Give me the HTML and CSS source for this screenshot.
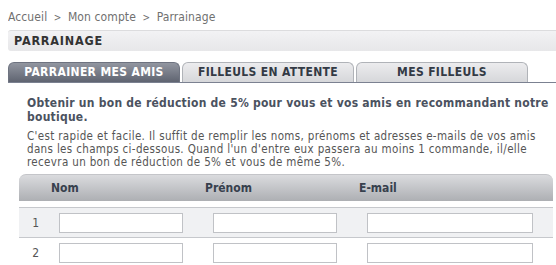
FILE: index.html
```html
<!DOCTYPE html>
<html>
<head>
  <meta charset="utf-8">
  <title>Parrainage</title>
  <link rel="stylesheet" href="styles.css">
</head>
<body>

<div class="crumbs">
  <a href="#">Accueil</a> <span class="sep">&gt;</span> <a href="#">Mon compte</a> <span class="sep">&gt;</span> <span>Parrainage</span>
</div>

<h1 class="page-title">PARRAINAGE</h1>

<div class="tabs">
  <a href="#" class="tab current">PARRAINER MES AMIS</a>
  <a href="#" class="tab">FILLEULS EN ATTENTE</a>
  <a href="#" class="tab">MES FILLEULS</a>
</div>

<div class="content">
  <h3 class="intro">Obtenir un bon de réduction de 5% pour vous et vos amis en recommandant notre boutique.</h3>
  <p class="text">
    C'est rapide et facile. Il suffit de remplir les noms, prénoms et adresses e-mails de vos amis
    dans les champs ci-dessous. Quand l'un d'entre eux passera au moins 1 commande, il/elle
    recevra un bon de réduction de 5% et vous de même 5%.
  </p>

  <div class="friends">
    <div class="friends-head">
      <span></span>
      <span>Nom</span>
      <span>Prénom</span>
      <span>E-mail</span>
    </div>
    <div class="friend-row odd">
      <span class="num">1</span>
      <span><input type="text"></span>
      <span><input type="text"></span>
      <span><input type="text" class="mail"></span>
    </div>
    <div class="friend-row">
      <span class="num">2</span>
      <span><input type="text"></span>
      <span><input type="text"></span>
      <span><input type="text" class="mail"></span>
    </div>
  </div>
</div>

</body>
</html>
```

FILE: styles.css
```css
body {
  margin: 0 0 0 8px;
  padding-top: 9px;
  font-family: "DejaVu Sans Condensed", "DejaVu Sans", sans-serif;
  font-size: 11px;
  color: #555;
  background: #fff;
}
a {
  text-decoration: none;
  color: inherit;
}
.crumbs {
  font-size: 12px;
  line-height: 16px;
  letter-spacing: 0.1px;
  color: #707070;
}
.crumbs .sep {
  font-size: 10px;
  margin: 0 3px;
}
.page-title {
  margin: 4px 0 0;
  height: 20px;
  line-height: 20px;
  padding-left: 6px;
  font-size: 12.5px;
  letter-spacing: 0.8px;
  font-weight: bold;
  color: #333;
  border-top: 1px solid #dcdcde;
  border-radius: 3px 0 0 3px;
  background: linear-gradient(#f2f2f4, #e7e7e9);
}
.tabs {
  display: flex;
  gap: 2px;
  margin-top: 11px;
  border-bottom: 1px solid #7b8191;
}
.tab {
  width: 170px;
  height: 19px;
  line-height: 19px;
  text-align: center;
  font-size: 12px;
  letter-spacing: 0.35px;
  font-weight: bold;
  color: #333a45;
  border: 1px solid #b0b3b8;
  border-bottom: 0;
  border-radius: 6px 6px 0 0;
  background: linear-gradient(#ececee, #d6d7da);
}
.tab.current {
  color: #fff;
  border-color: #6e7380;
  background: linear-gradient(#9296a0, #5f6471);
}
.content {
  margin-left: 11px;
  padding-top: 13px;
}
.intro {
  margin: 0 0 6px 8px;
  font-size: 12px;
  line-height: 14px;
  letter-spacing: 0.25px;
  color: #4b5260;
}
.text {
  max-width: 522px;
  margin: 0 0 5px 8px;
  font-size: 11.5px;
  line-height: 13px;
  letter-spacing: 0.35px;
  color: #555;
}
.friends {
  width: 534px;
}
.friends-head,
.friend-row {
  display: grid;
  grid-template-columns: 32px 154px 154px 1fr;
  align-items: center;
}
.friends-head {
  height: 26px;
  font-weight: bold;
  font-size: 12px;
  color: #37404d;
  border-radius: 7px 7px 0 0;
  border-top: 1px solid #c4c5c9;
  background: linear-gradient(#dadbde, #adafb3);
  margin-bottom: 6px;
}
.friend-row {
  height: 29px;
  border-top: 1px solid #c6c8cc;
}
.friend-row.odd {
  background: #f0f1f3;
  border-bottom: 1px solid #c6c8cc;
}
.friend-row + .friend-row {
  border-top: 0;
}
.num {
  text-align: right;
  padding-right: 12px;
  font-size: 12px;
  color: #555;
}
.friend-row input {
  display: block;
  box-sizing: border-box;
  margin-left: 8px;
  width: 124px;
  height: 20px;
  border: 1px solid #c0c2c6;
  background: #fff;
  padding: 0 3px;
}
.friend-row input.mail {
  width: 166px;
}
```
